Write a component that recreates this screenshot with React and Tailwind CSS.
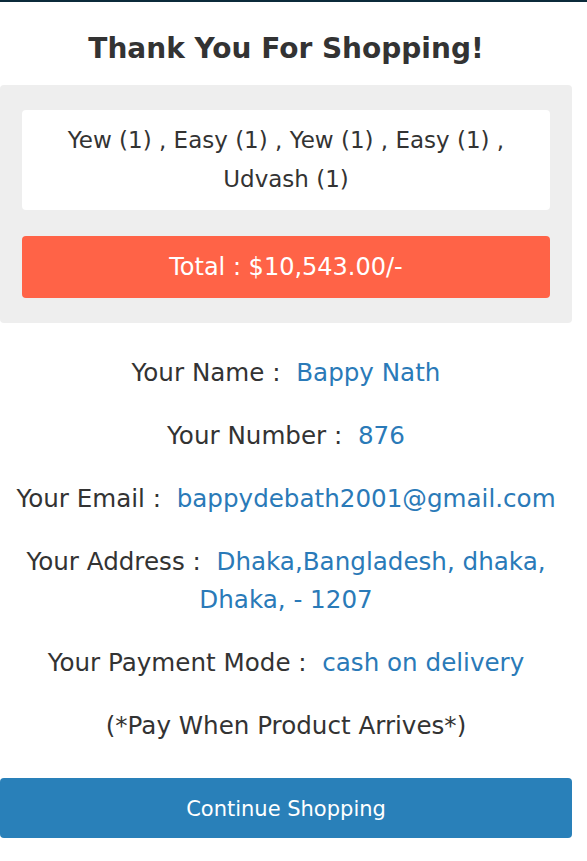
import React from 'react';

const details = [
  { label: 'Your Name :', value: 'Bappy Nath' },
  { label: 'Your Number :', value: '876' },
  { label: 'Your Email :', value: 'bappydebath2001@gmail.com' },
  { label: 'Your Address :', value: 'Dhaka,Bangladesh, dhaka, Dhaka, - 1207' },
  { label: 'Your Payment Mode :', value: 'cash on delivery' },
];

function App() {
  return (
    <div className="min-h-screen bg-white border-t-2 border-[#0b2a3a] font-['DejaVu_Sans',sans-serif] text-[#333]">
      <div className="w-[572px]">
        {/* Heading */}
        <h1 className="pt-[28px] pb-[18px] text-center text-[28px] leading-[37px] font-bold text-[#333]">
          Thank You For Shopping!
        </h1>

        {/* Order summary */}
        <div className="bg-[#eeeeee] rounded px-[22px] pt-[25px] pb-[25px]">
          <div className="bg-white rounded px-4 py-[11px] text-center text-[23px] leading-[39px]">
            Yew (1) , Easy (1) , Yew (1) , Easy (1) , Udvash (1)
          </div>
          <div className="mt-[26px] h-[62px] flex items-center justify-center bg-[#ff6347] rounded text-white text-[24px]">
            Total : $10,543.00/-
          </div>
        </div>

        {/* Customer details */}
        <div className="pt-[31px] pb-[33px] flex flex-col gap-[25px] text-center text-[24.6px] leading-[38px]">
          {details.map((d) => (
            <p key={d.label} className="px-2">
              {d.label}&nbsp; <span className="text-[#2a7ab8]">{d.value}</span>
            </p>
          ))}
          <p>(*Pay When Product Arrives*)</p>
        </div>

        <button className="w-full h-[60px] pt-[4px] bg-[#2980b9] rounded text-white text-[21px]">
          Continue Shopping
        </button>
      </div>
    </div>
  );
}

export default App;
